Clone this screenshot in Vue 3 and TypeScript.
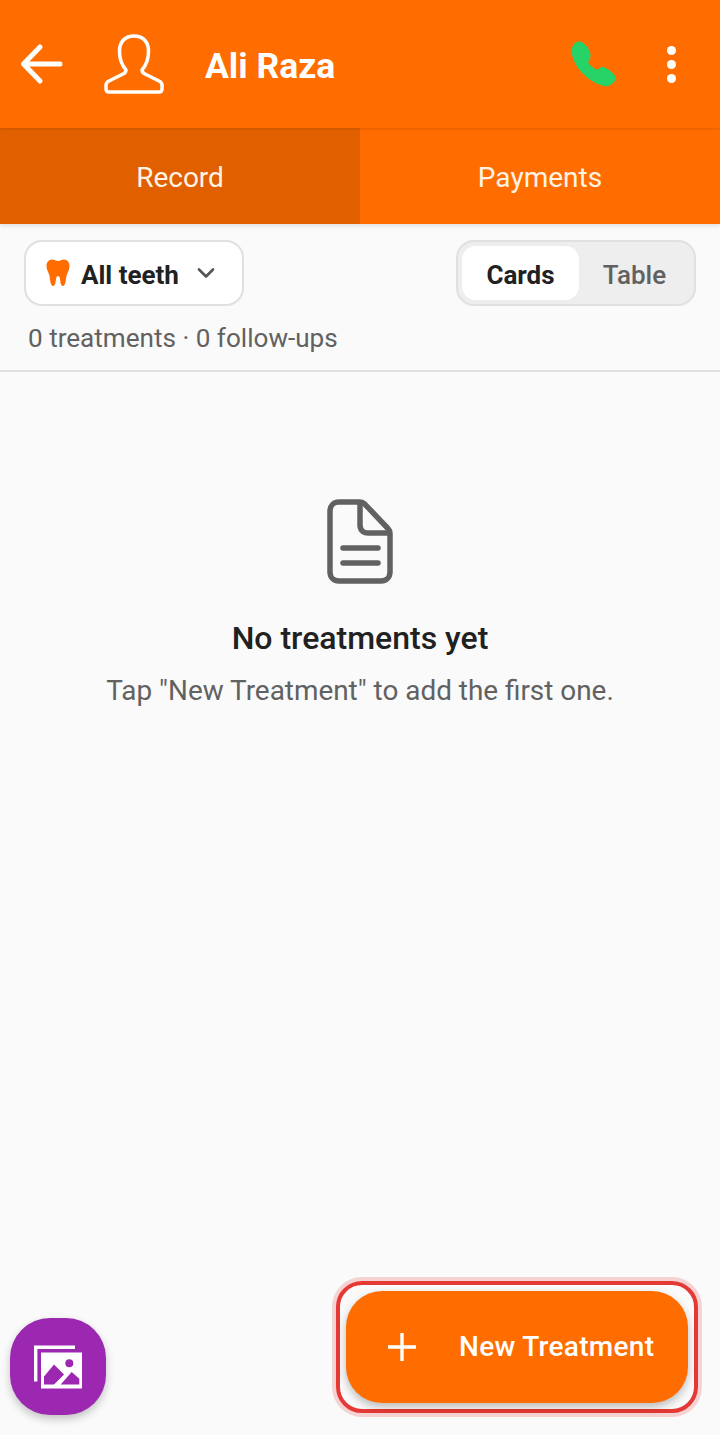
<template>
  <div class="screen">
    <header class="app-bar">
      <button class="icon-btn back">
        <svg width="48" height="48" viewBox="0 0 48 48" fill="none" stroke="#fff" stroke-width="5" stroke-linecap="round" stroke-linejoin="round">
          <path d="M42 24H6M22 7 5.5 24 22 41" />
        </svg>
      </button>
      <svg class="avatar" width="60" height="60" viewBox="0 0 60 60" fill="none" stroke="#fff" stroke-width="3.5" stroke-linejoin="round">
        <path d="M30 2C20 2 15.5 9 15.5 17C15.5 24 17.5 31 22 36C22 38 21 39 19 40L5 47C3 48 2 49.5 2 51V55C2 57 3 58 5 58H55C57 58 58 57 58 55V51C58 49.5 57 48 55 47L41 40C39 39 38 38 38 36C42.5 31 44.5 24 44.5 17C44.5 9 40 2 30 2Z" />
      </svg>
      <h1 class="name">Ali Raza</h1>
      <svg class="phone" width="46" height="46" viewBox="0 0 46 46" fill="#25d366">
        <path d="M7 0.5C10 0 13 2 15.5 5C18 8 20 12 19.5 15.5C19.2 18 18 20 17 21.5C19.5 25 23 27.5 26.5 29C28 27 30 25.5 32.5 26C36 27 41 31 44 34.5C46 37 45 39.5 42.5 41.5C40 44 37.5 45.8 34 45.2C24 43.5 14 36 7.5 27.5C3.5 22 0.5 15 0.8 9.5C1 5 3.5 1.2 7 0.5Z" />
      </svg>
      <div class="more">
        <span v-for="n in 3" :key="n" class="dot"></span>
      </div>
    </header>

    <nav class="tabs">
      <div v-for="tab in tabs" :key="tab" class="tab" :class="{ active: tab === activeTab }">{{ tab }}</div>
    </nav>

    <section class="toolbar">
      <div class="filter-row">
        <div class="chip">
          <svg width="24" height="28" viewBox="0 0 24 28" fill="#ff6d00">
            <path d="M6 .5C8 .5 10 2 12 2C14 2 16 .5 18 .5C21.5 .5 23.5 3.5 23.5 7C23.5 11 21.5 13 20.5 17C20 20 19.5 27 17 27C14.5 27 14.5 23 14 20C13.7 18 13 17 12 17C11 17 10.3 18 10 20C9.5 23 9.5 27 7 27C4.5 27 4 20 3.5 17C2.5 13 .5 11 .5 7C.5 3.5 2.5 .5 6 .5Z" />
          </svg>
          <span class="chip-label">All teeth</span>
          <svg class="chevron" width="18" height="12" viewBox="0 0 18 12" fill="none" stroke="#555" stroke-width="2.6" stroke-linecap="round" stroke-linejoin="round">
            <path d="M2 2.5 9 9.5 16 2.5" />
          </svg>
        </div>
        <div class="segmented">
          <div class="segment selected">Cards</div>
          <div class="segment">Table</div>
        </div>
      </div>
      <p class="summary">{{ treatments }} treatments · {{ followUps }} follow-ups</p>
    </section>

    <main class="empty">
      <svg width="70" height="88" viewBox="0 0 70 88" fill="none" stroke="#616161" stroke-width="5.5" stroke-linecap="round" stroke-linejoin="round">
        <path d="M14 4H35C37 4 38.5 4.8 40 6.3L62.5 30C64.2 31.8 65 33 65 35.5V74C65 79.5 61 83 56 83H14C9 83 5 79.5 5 74V13C5 7.5 9 4 14 4Z" />
        <path d="M35 5V27C35 32 38 35 43 35H64" />
        <path d="M18 50H53M18 65H53" />
      </svg>
      <h2 class="empty-title">No treatments yet</h2>
      <p class="empty-text">Tap "New Treatment" to add the first one.</p>
    </main>

    <button class="gallery">
      <svg width="50" height="46" viewBox="0 0 50 46" fill="none">
        <path d="M1 3.2H42M2.7 1.5V37.5" stroke="#fff" stroke-width="3.4" />
        <rect x="8" y="8.5" width="41" height="36" fill="#fff" />
        <circle cx="36.3" cy="19.2" r="4" fill="#9c27b0" />
        <path d="M11 32.5 21 20.5 31 30.5 21 40.5H11ZM27.7 40.5 38.7 28 46.3 34.8V40.5Z" fill="#9c27b0" />
      </svg>
    </button>

    <div class="highlight">
      <button class="fab">
        <svg width="30" height="30" viewBox="0 0 30 30" stroke="#fff" stroke-width="3.4" fill="none">
          <path d="M15 1V29M1 15H29" />
        </svg>
        <span>New Treatment</span>
      </button>
    </div>
  </div>
</template>

<script setup lang="ts">
import { ref } from "vue";

const tabs = ["Record", "Payments"];
const activeTab = ref("Record");

const treatments = ref(0);
const followUps = ref(0);
</script>

<style>
html,
body {
  margin: 0;
  background: #fafafa;
}
</style>

<style scoped>
.screen {
  position: relative;
  display: flex;
  flex-direction: column;
  height: 1435px;
  overflow: hidden;
  background: #fafafa;
  font-family: Roboto, "Liberation Sans", sans-serif;
}

button {
  border: none;
  padding: 0;
  font-family: inherit;
}

.app-bar {
  display: flex;
  align-items: center;
  height: 128px;
  padding: 0 44px 0 18px;
  box-sizing: border-box;
  background: #ff6d00;
  box-shadow: 0 1px 3px rgba(0, 0, 0, 0.12);
  position: relative;
  z-index: 1;
}

.icon-btn {
  display: flex;
  background: none;
}

.avatar {
  margin-left: 38px;
}

.name {
  margin: 4px 0 0 41px;
  flex: 1;
  color: #fff;
  font-size: 35.5px;
  font-weight: 700;
}

.more {
  display: flex;
  flex-direction: column;
  gap: 5px;
  margin-left: 50px;
}

.dot {
  width: 9px;
  height: 9px;
  border-radius: 50%;
  background: #fff;
}

.tabs {
  display: flex;
  height: 96px;
  background: #ff6d00;
  box-shadow: 0 2px 4px rgba(0, 0, 0, 0.1);
}

.tab {
  flex: 1;
  display: flex;
  align-items: center;
  justify-content: center;
  padding-top: 2px;
  box-sizing: border-box;
  color: #fff3e6;
  font-size: 28px;
}

.tab.active {
  background: #e06000;
}

.toolbar {
  padding: 16px 24px 0;
  height: 148px;
  box-sizing: border-box;
  border-bottom: 2px solid #e0e0e0;
}

.filter-row {
  display: flex;
  justify-content: space-between;
}

.chip {
  display: flex;
  align-items: center;
  width: 220px;
  height: 66px;
  box-sizing: border-box;
  padding-left: 20px;
  background: #fff;
  border: 2px solid #e0e0e0;
  border-radius: 18px;
}

.chip-label {
  margin-left: 11px;
  padding-top: 3px;
  color: #212121;
  font-size: 26px;
  font-weight: 700;
}

.chevron {
  margin-left: 18px;
}

.segmented {
  display: flex;
  width: 240px;
  height: 66px;
  box-sizing: border-box;
  padding: 4px;
  background: #eeeeee;
  border: 2px solid #e0e0e0;
  border-radius: 18px;
}

.segment {
  flex: 1;
  display: flex;
  align-items: center;
  justify-content: center;
  padding-top: 3px;
  box-sizing: border-box;
  color: #616161;
  font-size: 26px;
  font-weight: 500;
}

.segment.selected {
  flex: 0 0 117px;
  background: #fff;
  border-radius: 14px;
  color: #212121;
  font-weight: 700;
}

.summary {
  margin: 16px 0 0 4px;
  color: #616161;
  font-size: 26.1px;
  line-height: 32px;
}

.empty {
  display: flex;
  flex-direction: column;
  align-items: center;
  padding-top: 126px;
}

.empty-title {
  margin: 32px 0 0;
  color: #212121;
  font-size: 32px;
  font-weight: 500;
  line-height: 40px;
}

.empty-text {
  margin: 15px 0 0;
  color: #616161;
  font-size: 27.9px;
  line-height: 36px;
}

.gallery {
  position: absolute;
  left: 10px;
  top: 1318px;
  display: flex;
  align-items: center;
  justify-content: center;
  width: 96px;
  height: 97px;
  border-radius: 40px;
  background: #9c27b0;
  box-shadow: 0 4px 8px rgba(0, 0, 0, 0.22);
}

.highlight {
  position: absolute;
  left: 336px;
  top: 1281px;
  width: 362px;
  height: 132px;
  box-sizing: border-box;
  padding: 6px;
  border: 4px solid #e53935;
  border-radius: 26px;
  box-shadow: 0 0 0 4px rgba(229, 57, 53, 0.2);
}

.fab {
  display: flex;
  align-items: center;
  width: 342px;
  height: 112px;
  padding-left: 41px;
  border-radius: 36px;
  background: #ff6d00;
  color: #fff;
  font-size: 28px;
  font-weight: 500;
  letter-spacing: 0.3px;
  box-shadow: 0 4px 8px rgba(0, 0, 0, 0.25);
}

.fab span {
  margin-left: 42px;
  padding-bottom: 2px;
}
</style>
